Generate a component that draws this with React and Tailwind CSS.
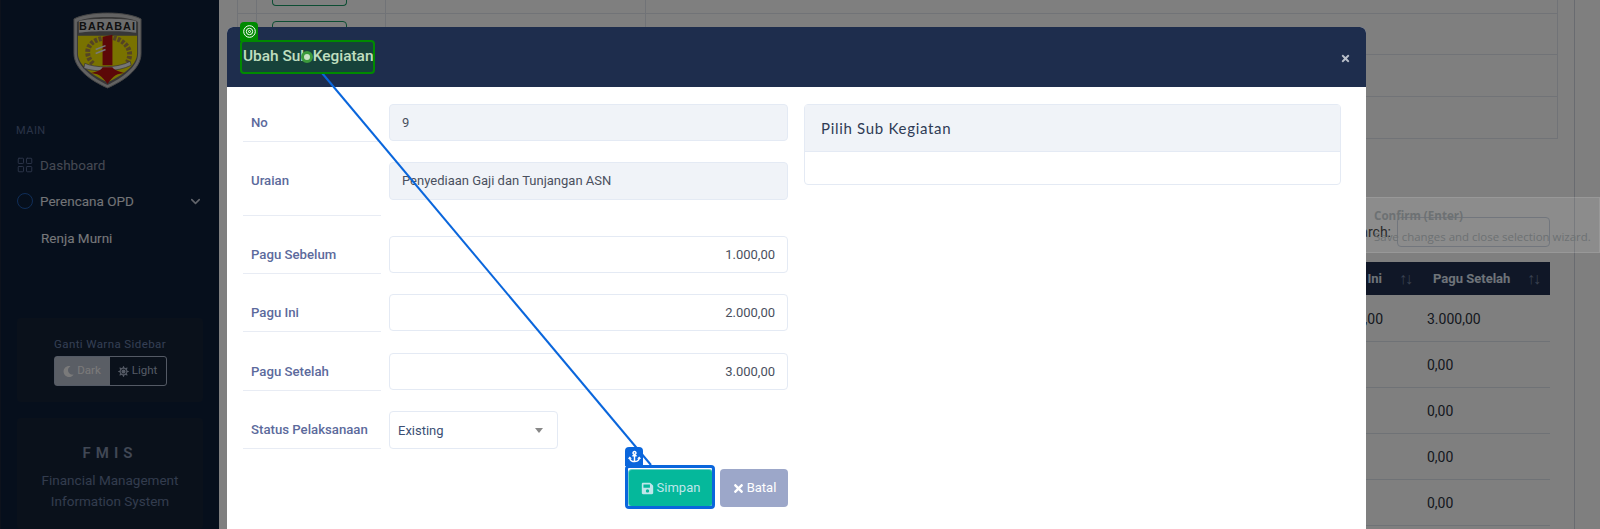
import React from 'react';
import { ChevronDown, LayoutGrid } from 'lucide-react';
import { FaAnchor, FaMoon, FaSave, FaSun, FaTimes } from 'react-icons/fa';

function Logo() {
  return (
    <svg width="71" height="77" viewBox="0 0 72 78" className="block">
      <path d="M36 1 C50 1 62 3 70 7 L70 42 C70 58 52 70 36 77 C20 70 2 58 2 42 L2 7 C10 3 22 1 36 1 Z" fill="#c4c4c4" stroke="#8a8a8a" strokeWidth="1" />
      <path d="M36 5 C49 5 60 6 67 10 L67 42 C67 56 50 67 36 74 C22 67 5 56 5 42 L5 10 C12 6 23 5 36 5 Z" fill="#6e6e6e" />
      <path d="M6 24 L66 24 L66 42 C66 54 50 65 36 71 C22 65 6 54 6 42 Z" fill="#f2e400" />
      <path d="M7 9 C20 6 52 6 65 9 L65 21 C50 19 22 19 7 21 Z" fill="#d9d9d9" />
      <text x="36" y="18.5" textAnchor="middle" fontFamily="Liberation Sans, sans-serif" fontSize="11" fontWeight="700" letterSpacing="1" fill="#222">BARABAI</text>
      <g fill="none" stroke="#a8874a" strokeWidth="5" strokeDasharray="3 1.5">
        <path d="M30 27 C14 30 12 44 22 53" />
        <path d="M42 26 C57 30 62 42 56 51" />
      </g>
      <path d="M31 25 L41 23 L41 54 L31 54 Z" fill="#b81010" />
      <path d="M24 38 L34 34 M24 42 L34 38" stroke="#f0f0f0" strokeWidth="1.5" />
      <path d="M13 52 C24 57 46 57 59 50 L60 54 C46 61 24 61 12 57 Z" fill="#ececec" stroke="#555" strokeWidth="0.6" />
      <path d="M18 62 C28 60 30 58 31 56 L41 56 C42 58 46 60 54 62 C46 62 42 64 36 73 C30 64 26 62 18 62 Z" fill="#b81010" />
    </svg>
  );
}

function Sidebar() {
  return (
    <aside className="w-[219px] shrink-0 h-full bg-[#0d1f39] border-l border-[#1a2538] flex flex-col">
      <div className="flex justify-center pt-[12px] pr-[5px]">
        <Logo />
      </div>
      <div className="px-[15px] pt-[35px] text-[11px] leading-[14px] tracking-[0.5px] text-[#55678f]">MAIN</div>
      <nav className="mt-[9px] pl-[16px] pr-[16px] text-[13.5px]">
        <div className="flex items-center h-[36px] text-[#8a93a6]">
          <LayoutGrid size={18} strokeWidth={1.3} className="text-[#55678f] -ml-[1px]" />
          <span className="ml-[6px]">Dashboard</span>
        </div>
        <div className="flex items-center h-[36px] text-[#e6e9ef]">
          <span className="w-[16px] h-[16px] rounded-full border border-[#1f5bb0]" />
          <span className="ml-[7px]">Perencana OPD</span>
          <ChevronDown size={15} strokeWidth={2.5} className="ml-auto text-[#c4cad6]" />
        </div>
        <div className="flex items-center h-[36px] pl-[24px] pt-[2px] text-[#eef0f4]">Renja Murni</div>
      </nav>
      <div className="mx-[16px] mt-[63px] h-[84px] rounded-[4px] bg-[#142337] flex flex-col items-center pt-[18px]">
        <div className="text-[11.5px] leading-[16px] tracking-[0.4px] text-[#6a7fa8]">Ganti Warna Sidebar</div>
        <div className="mt-[4px] flex h-[30px] w-[113px] rounded-[3px] border border-[#a9b4ca] text-[11.5px]">
          <div className="w-[55px] bg-[#b4bccb] flex items-center justify-center gap-[3px] text-[#f4f4f4]">
            <FaMoon size={11} /> Dark
          </div>
          <div className="flex-1 flex items-center justify-center gap-[3px] text-[#a9b4ca]">
            <FaSun size={11} /> Light
          </div>
        </div>
      </div>
      <div className="mx-[16px] mt-[16px] flex-1 rounded-[4px] bg-[#142337] text-center pt-[25px]">
        <div className="text-[15px] leading-[20px] font-semibold tracking-[5px] text-[#8290aa]">FMIS</div>
        <div className="mt-[7px] text-[13.5px] leading-[21px] text-[#66789c]">
          Financial Management
          <br />
          Information System
        </div>
      </div>
    </aside>
  );
}

function BackdropPage() {
  const rows = ['h-[41px]', 'h-[42px]', 'h-[41px]'];
  const values = ['3.000,00', '0,00', '0,00', '0,00', '0,00'];
  return (
    <main className="flex-1 h-full bg-white">
      <div className="w-[1356px] h-full border-r border-[#d2d7e0] pl-[18px]">
        {/* top table, mostly behind the modal */}
        <div className="w-[1321px] border-x border-b border-[#e3e7ee]">
          <div className="h-[14px] flex border-b border-[#e3e7ee]">
            <div className="w-[19px] border-r border-[#e3e7ee]" />
            <div className="w-[129px] border-r border-[#e3e7ee] pl-[15px]">
              <div className="h-[6px] w-[75px] border-x border-b border-[#1a9a66] rounded-b-[4px]" />
            </div>
            <div className="w-[260px] border-r border-[#e3e7ee]" />
          </div>
          {rows.map((h, i) => (
            <div key={i} className={`${h} flex ${i < 2 ? 'border-b border-[#e3e7ee]' : ''}`}>
              <div className="w-[19px] border-r border-[#e3e7ee]" />
              <div className="w-[129px] border-r border-[#e3e7ee] pl-[15px] pt-[7px]">
                {i === 0 && <div className="h-[30px] w-[75px] border border-[#1a9a66] rounded-[4px]" />}
              </div>
              <div className="w-[260px] border-r border-[#e3e7ee]" />
            </div>
          ))}
        </div>
        {/* data table */}
        <div className="w-[1321px] mt-[78px] flex justify-end pr-[8px]">
          <div className="text-[14px] text-[#222] mt-[5px] mr-[6px]">Search:</div>
          <div className="w-[153px] h-[30px] border border-[#c5cfdf] rounded-[4px]" />
        </div>
        <div className="w-[1321px] pr-[8px] flex justify-end mt-[15px]">
          <div className="w-[300px]">
            <div className="h-[33px] bg-[#202f4f] flex items-center text-[13px] font-bold text-[#dfe6f2]">
              <span className="w-[133px] text-right pr-[1px]">Pagu Ini</span>
              <span className="w-[50px] pl-[16px] text-[16px] font-normal text-[#71809e] tracking-[-2px]">↑↓</span>
              <span className="w-[94px]">Pagu Setelah</span>
              <span className="text-[16px] font-normal text-[#71809e] tracking-[-2px]">↑↓</span>
            </div>
            {values.map((v, i) => (
              <div key={i} className={`flex items-center pt-[2px] border-b border-[#dfe4ec] text-[14px] text-[#2b3140] ${i === 0 ? 'h-[47px]' : 'h-[46px]'}`}>
                <span className="w-[133px] text-right">{i === 0 ? '2.000,00' : ''}</span>
                <span className="ml-[44px]">{v}</span>
              </div>
            ))}
          </div>
        </div>
      </div>
    </main>
  );
}

function Field({ label, value, tall, mb, readOnly, right }) {
  return (
    <div className={`flex gap-[8px] ${mb || 'mb-[20px]'}`}>
      <div className={`w-[138px] shrink-0 pl-[8px] border-b border-[#e8ecf4] text-[13.2px] font-medium text-[#5c6a9c] pt-[9px] ${tall ? 'h-[54px]' : 'h-[38px]'}`}>
        {label}
      </div>
      <div
        className={`flex-1 ${tall ? 'h-[38px]' : 'h-[37px]'} rounded-[4px] border border-[#e4eaf4] flex items-center px-[12px] text-[13px] text-[#4a505e] ${readOnly ? 'bg-[#f0f3f8]' : 'bg-white'} ${right ? 'justify-end' : ''}`}
      >
        {value}
      </div>
    </div>
  );
}

function Modal() {
  return (
    <div className="absolute left-[227px] top-[27px] w-[1139px] h-[520px] rounded-t-[6px] bg-white overflow-hidden">
      <div className="h-[60px] bg-[#1e2d4d] flex items-center pl-[16px] pr-[15px] text-white">
        <h5 className="text-[15.4px] font-medium">Ubah Sub Kegiatan</h5>
        <FaTimes size={11} className="ml-auto mt-[2px] text-[#b9bfca]" />
      </div>
      <div className="flex pt-[17px] pl-[16px] pr-[29px]">
        <div className="w-[545px] shrink-0">
          <Field label="No" value="9" readOnly />
          <Field label="Uraian" value="Penyediaan Gaji dan Tunjangan ASN" tall readOnly />
          <Field label="Pagu Sebelum" value="1.000,00" right />
          <Field label="Pagu Ini" value="2.000,00" right mb="mb-[21px]" />
          <Field label="Pagu Setelah" value="3.000,00" right />
          <div className="flex gap-[8px] mb-[20px]">
            <div className="w-[138px] shrink-0 h-[38px] pl-[8px] pt-[9px] border-b border-[#e8ecf4] text-[13.2px] font-medium text-[#5c6a9c] whitespace-nowrap">
              Status Pelaksanaan
            </div>
            <div className="w-[169px] h-[38px] rounded-[4px] border border-[#e4eaf4] flex items-center justify-between pl-[9px] pr-[14px] text-[13px] text-[#3b4f74]">
              <span className="-ml-[1px] pt-[1px]">Existing</span>
              <span className="w-0 h-0 border-x-[4px] border-x-transparent border-t-[5px] border-t-[#888]" />
            </div>
          </div>
          <div className="flex justify-end gap-[7px]">
            <button className="w-[85px] h-[38px] rounded-[4px] bg-[#05b89b] text-[13px] text-[#bfe6ea] flex items-center justify-center gap-[3px] border border-[#a9dbe6]/60">
              <FaSave size={13} /> Simpan
            </button>
            <button className="w-[68px] h-[38px] rounded-[4px] bg-[#9ca7c9] text-[13px] text-white flex items-center justify-center gap-[2px]">
              <FaTimes size={13} /> Batal
            </button>
          </div>
        </div>
        <div className="ml-[16px] flex-1 h-[81px] -mr-[4px] rounded-[4px] border border-[#e4eaf4]">
          <div className="h-[47px] bg-[#f0f3f8] border-b border-[#e4eaf4] flex items-center pl-[16px] text-[15px] text-[#2f3b55] font-['Lato',sans-serif] tracking-[0.7px]">
            Pilih Sub Kegiatan
          </div>
        </div>
      </div>
    </div>
  );
}

// anchor editor overlay: green box on the title, blue box on the button and the link line
function Annotations() {
  return (
    <>
      <svg className="absolute left-0 top-0 pointer-events-none" width="1600" height="529">
        <line x1="322" y1="73" x2="651" y2="465" stroke="#0a66dc" strokeWidth="2" />
      </svg>
      <div className="absolute left-[240px] top-[40px] w-[135px] h-[34px] rounded-[4px] border-2 border-[#008a00] bg-[#008000]/25" />
      <div className="absolute left-[240px] top-[22px] w-[18px] h-[19px] rounded-t-[4px] bg-[#008a00] flex items-center justify-center">
        <svg width="13" height="13" viewBox="0 0 13 13" fill="none" stroke="#fff">
          <circle cx="6.5" cy="6.5" r="5.8" />
          <circle cx="6.5" cy="6.5" r="3.2" />
          <circle cx="6.5" cy="6.5" r="1" />
        </svg>
      </div>
      <div className="absolute left-[301px] top-[51px] w-[12px] h-[12px] rounded-full border-[3px] border-[#3c9a3c] bg-[#c9e3c6]" />
      <div className="absolute left-[625px] top-[465px] w-[90px] h-[44px] rounded-[4px] border-[3px] border-[#0a66dc]" />
      <div className="absolute left-[625px] top-[447px] w-[18px] h-[19px] rounded-t-[4px] bg-[#0a66dc] flex items-center justify-center">
        <FaAnchor size={13} className="text-white" />
      </div>
    </>
  );
}

export default function App() {
  return (
    <div className="relative w-[1600px] h-[529px] overflow-hidden flex font-['Roboto',sans-serif]">
      <Sidebar />
      <BackdropPage />
      <div className="absolute inset-0 bg-black/50" />
      <div className="absolute left-[1361px] top-[197px] w-[239px] h-[56px] bg-white/10 border border-white/10 pl-[12px] pt-[7px] font-['Open_Sans',sans-serif] leading-[21px] text-[#6d7173]">
        <div className="font-bold text-[11.6px]">Confirm (Enter)</div>
        <div className="whitespace-nowrap text-[11.45px]">Save changes and close selection wizard.</div>
      </div>
      <Modal />
      <Annotations />
    </div>
  );
}
